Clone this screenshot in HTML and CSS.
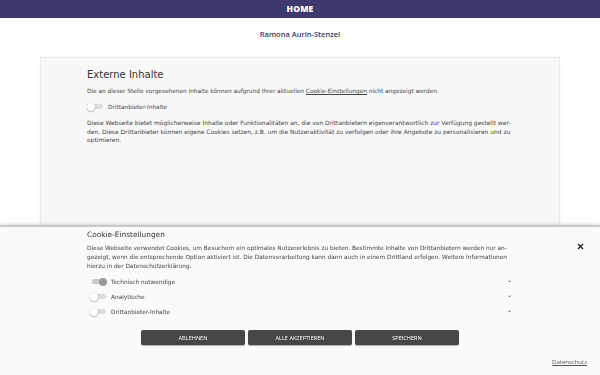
FILE: index.html
```html
<!DOCTYPE html>
<html lang="de">
<head>
    <meta charset="UTF-8">
    <meta name="viewport" content="width=device-width, initial-scale=1.0">
    <title>Ramona Aurin-Stenzel</title>
    <link rel="stylesheet" href="styles.css">
</head>
<body>
    <div class="topbar">HOME</div>
    <div class="site-name">Ramona Aurin-Stenzel</div>

    <div class="content-box">
        <div class="inner">
            <h2>Externe Inhalte</h2>
            <p>Die an dieser Stelle vorgesehenen Inhalte können aufgrund Ihrer aktuellen <a href="#">Cookie-Einstellungen</a> nicht angezeigt werden.</p>
            <div class="toggle-row">
                <span class="toggle"><span class="knob"></span></span>
                <span class="toggle-label">Drittanbieter-Inhalte</span>
            </div>
            <p class="info">Diese Webseite bietet möglicherweise Inhalte oder Funktionalitäten an, die von Drittanbietern eigenverantwortlich zur Verfügung gestellt wer&shy;den. Diese Drittanbieter können eigene Cookies setzen, z.B. um die Nutzeraktivität zu verfolgen oder ihre Angebote zu personalisieren und zu optimieren.</p>
        </div>
    </div>

    <!-- Cookie banner -->
    <div class="cookie-banner">
        <div class="inner">
            <div class="cookie-title">Cookie-Einstellungen</div>
            <p>Diese Webseite verwendet Cookies, um Besuchern ein optimales Nutzererlebnis zu bieten. Bestimmte Inhalte von Drittanbietern werden nur an&shy;gezeigt, wenn die entsprechende Option aktiviert ist. Die Datenverarbeitung kann dann auch in einem Drittland erfolgen. Weitere Informationen hierzu in der Datenschutzerklärung.</p>

            <div class="options">
                <div class="option">
                    <span class="toggle on"><span class="knob"></span></span>
                    <span class="toggle-label">Technisch notwendige</span>
                    <span class="chevron">&#8964;</span>
                </div>
                <div class="option">
                    <span class="toggle"><span class="knob"></span></span>
                    <span class="toggle-label">Analytische</span>
                    <span class="chevron">&#8964;</span>
                </div>
                <div class="option">
                    <span class="toggle"><span class="knob"></span></span>
                    <span class="toggle-label">Drittanbieter-Inhalte</span>
                    <span class="chevron">&#8964;</span>
                </div>
            </div>
        </div>

        <div class="buttons">
            <button>ABLEHNEN</button>
            <button>ALLE AKZEPTIEREN</button>
            <button>SPEICHERN</button>
        </div>

        <div class="footer-link"><a href="#">Datenschutz</a></div>

        <span class="close">
            <svg width="7" height="7" viewBox="0 0 7 7"><path d="M1 1 L6 6 M6 1 L1 6" stroke="#222" stroke-width="1.4"/></svg>
        </span>
    </div>
</body>
</html>
```

FILE: styles.css
```css
html, body {
    margin: 0;
    padding: 0;
    background-color: #fff;
    font-family: "DejaVu Sans", sans-serif;
    color: #444;
    height: 100%;
    overflow: hidden;
}
.topbar {
    height: 18px;
    line-height: 18px;
    background-color: #3e3a6d;
    color: #fff;
    text-align: center;
    font-family: "Open Sans", sans-serif;
    font-weight: 800;
    font-size: 8.5px;
    letter-spacing: 0.2px;
}
.site-name {
    margin-top: 10px;
    line-height: 12px;
    text-align: center;
    font-family: "Open Sans", sans-serif;
    font-size: 7.5px;
    font-weight: 600;
    color: #3b3766;
}
.content-box {
    margin: 17px 40px 0;
    height: 220px;
    background-color: #f8f8f8;
    border: 1px solid #ececec;
    box-shadow: 0 -1px 2px rgba(0, 0, 0, 0.05);
}
.inner {
    width: 426px;
    margin: 0 auto;
}
.content-box .inner {
    padding-top: 11px;
}
h2 {
    margin: 0 0 6px;
    font-size: 10px;
    line-height: 12px;
    font-weight: normal;
    color: #333;
}
p {
    margin: 0;
    font-size: 5.8px;
    line-height: 9px;
    color: #444;
}
p.info {
    margin-top: 7px;
    font-size: 5.95px;
    line-height: 8.6px;
}
a {
    color: #444;
    text-decoration: underline;
}
.toggle-row {
    display: flex;
    align-items: center;
    gap: 5px;
    height: 11px;
    margin-top: 5px;
}
.toggle {
    position: relative;
    display: inline-block;
    width: 14px;
    height: 5px;
    border-radius: 3px;
    background-color: #ddd;
    margin-left: 2px;
}
.knob {
    position: absolute;
    left: -2px;
    top: -1.5px;
    width: 8px;
    height: 8px;
    border-radius: 50%;
    background-color: #fff;
    box-shadow: 0 0.5px 1.5px rgba(0, 0, 0, 0.45);
}
.toggle.on {
    background-color: #c8c8c8;
}
.toggle.on .knob {
    left: auto;
    right: -1px;
    background-color: #999;
    box-shadow: none;
}
.toggle-label {
    font-size: 5.8px;
    color: #444;
}
/* Cookie banner */
.cookie-banner {
    position: fixed;
    left: 0;
    right: 0;
    bottom: 0;
    height: 148px;
    background-color: #fafafa;
    border-top: 2px solid #c8c8c8;
    box-shadow: 0 -1px 3px rgba(0, 0, 0, 0.15);
}
.cookie-banner .inner {
    padding-top: 3px;
}
.cookie-title {
    font-size: 7.4px;
    line-height: 10px;
    color: #333;
    margin-bottom: 4px;
}
.close {
    position: absolute;
    right: 16px;
    top: 8px;
}
.options {
    margin-top: 3px;
    padding-left: 3px;
}
.option {
    display: flex;
    align-items: center;
    gap: 5px;
    height: 15px;
}
.chevron {
    margin-left: auto;
    margin-right: 1px;
    font-size: 6px;
    line-height: 6px;
    color: #333;
    position: relative;
    top: -2px;
}
.buttons {
    display: flex;
    justify-content: center;
    gap: 3px;
    margin-top: 11px;
}
button {
    width: 104px;
    height: 15px;
    padding: 0;
    border: none;
    border-radius: 2px;
    background-color: #464646;
    color: #fff;
    font-family: "Open Sans", sans-serif;
    font-size: 5.6px;
    box-shadow: 0 1px 1px rgba(0, 0, 0, 0.3);
    cursor: pointer;
}
.footer-link {
    text-align: right;
    padding-right: 13px;
    margin-top: 13px;
    line-height: 8px;
    font-family: "Open Sans", sans-serif;
    font-size: 6px;
}
.footer-link a {
    color: #555;
}
```
